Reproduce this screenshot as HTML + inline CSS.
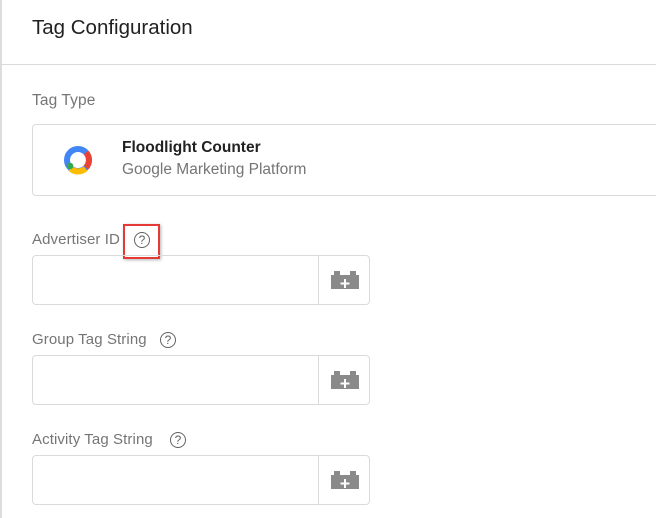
<!DOCTYPE html>
<html><head><style>
body{margin:0;width:656px;height:518px;background:#fff;font-family:"Liberation Sans",Arial,sans-serif;position:relative;overflow:hidden}
.lb{position:absolute;left:0;top:0;width:2px;height:518px;background:#dcdcdc}
.t{position:absolute;left:32px;top:16px;font-size:20.5px;color:#212121}
.hr{position:absolute;left:2px;right:0;top:64px;height:1px;background:#dadada}
.lab{position:absolute;left:32px;font-size:15px;color:#757575;letter-spacing:0.1px}
.card{position:absolute;left:32px;top:124px;width:640px;height:70px;border:1px solid #dadada;border-radius:4px}
.in{position:absolute;left:32px;width:336px;height:48px;border:1px solid #dadada;border-radius:4px}
.in .d{position:absolute;left:285px;top:0;width:1px;height:48px;background:#dadada}
.in svg{position:absolute;left:298px;top:15px}
.q{position:absolute;width:14px;height:14px;border:1.3px solid #616161;border-radius:50%;font-size:12px;line-height:14px;text-align:center;color:#616161}
</style></head><body>
<div class="lb"></div>
<div class="t">Tag Configuration</div>
<div class="hr"></div>
<div class="lab" style="top:92px;font-size:15.5px">Tag Type</div>
<div class="card">
<svg style="position:absolute;left:30px;top:21px" width="30" height="30" viewBox="0 0 30 30">
<circle cx="15" cy="14" r="11" fill="none" stroke="#4285f4" stroke-width="6"/>
<path d="M23 6.5 A11 11 0 0 1 23 21.5" fill="none" stroke="#ea4335" stroke-width="6"/>
<path d="M22.5 22.5 A11 11 0 0 1 7.5 22.5" fill="none" stroke="#fbbc04" stroke-width="6"/>
<circle cx="7" cy="20" r="3.3" fill="#34a853"/>
</svg>
<div style="position:absolute;left:89px;top:14px;font-size:15.5px;font-weight:bold;color:#212121">Floodlight Counter</div>
<div style="position:absolute;left:89px;top:36px;font-size:15.5px;color:#757575">Google Marketing Platform</div>
</div>
<div class="lab" style="top:231px">Advertiser ID</div><div class="q" style="left:134px;top:232px">?</div>
<div style="position:absolute;left:123px;top:224px;width:33px;height:31px;border:2px solid #e53935;box-shadow:1px 1px 3px rgba(0,0,0,.3)"></div>
<div class="in" style="top:255px"><div class="d"></div><svg width="28" height="18"><rect x="0" y="4" width="28" height="14" fill="#8a8a8a"/><rect x="3" y="0" width="6" height="5" fill="#8a8a8a"/><rect x="19" y="0" width="6" height="5" fill="#8a8a8a"/><path d="M14 8v9M9.5 12.5h9" stroke="#fff" stroke-width="2"/></svg></div>
<div class="lab" style="top:331px">Group Tag String</div><div class="q" style="left:160px;top:332px">?</div>
<div class="in" style="top:355px"><div class="d"></div><svg width="28" height="18"><rect x="0" y="4" width="28" height="14" fill="#8a8a8a"/><rect x="3" y="0" width="6" height="5" fill="#8a8a8a"/><rect x="19" y="0" width="6" height="5" fill="#8a8a8a"/><path d="M14 8v9M9.5 12.5h9" stroke="#fff" stroke-width="2"/></svg></div>
<div class="lab" style="top:431px">Activity Tag String</div><div class="q" style="left:170px;top:432px">?</div>
<div class="in" style="top:455px"><div class="d"></div><svg width="28" height="18"><rect x="0" y="4" width="28" height="14" fill="#8a8a8a"/><rect x="3" y="0" width="6" height="5" fill="#8a8a8a"/><rect x="19" y="0" width="6" height="5" fill="#8a8a8a"/><path d="M14 8v9M9.5 12.5h9" stroke="#fff" stroke-width="2"/></svg></div>
</body></html>
